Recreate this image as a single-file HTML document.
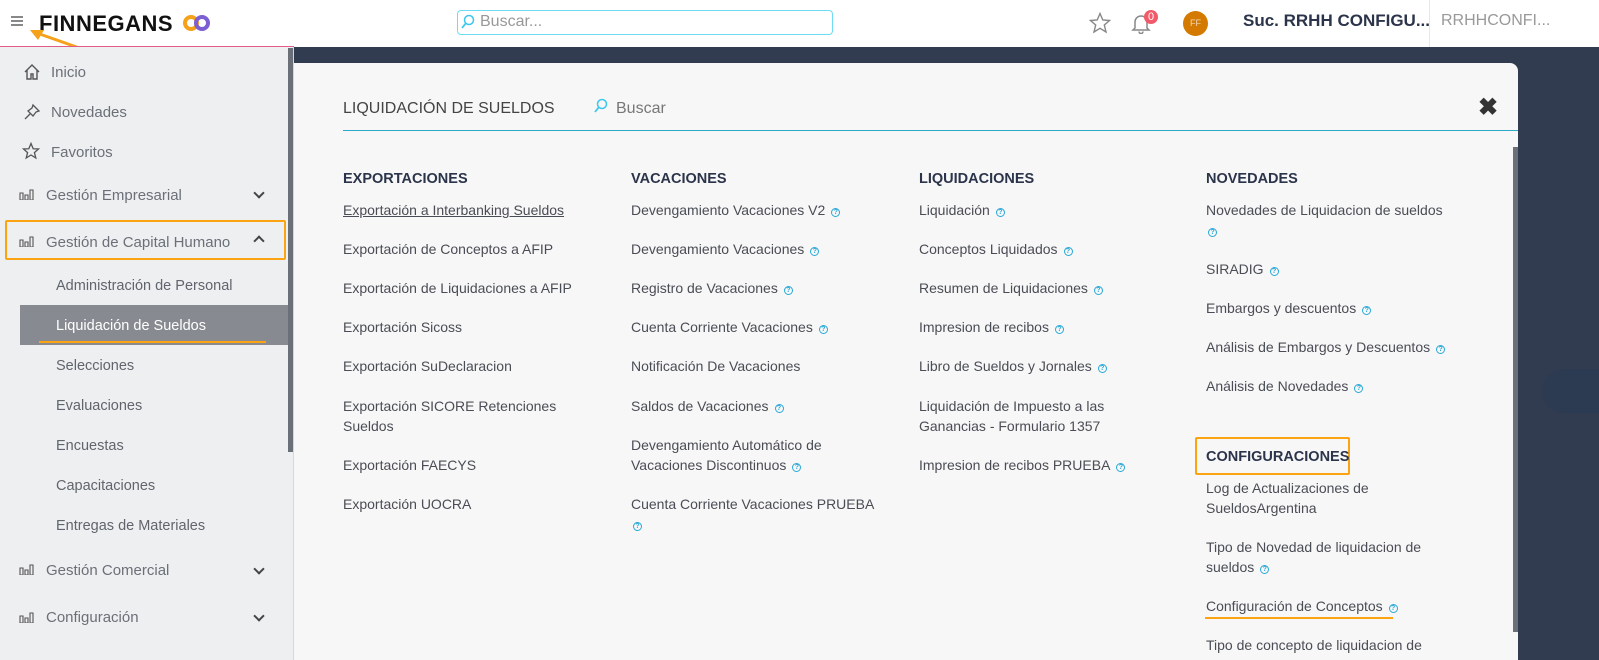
<!DOCTYPE html>
<html><head><meta charset="utf-8">
<style>
*{margin:0;padding:0;box-sizing:border-box}
body{width:1599px;height:660px;overflow:hidden;background:#323c51;font-family:"Liberation Sans",sans-serif;position:relative}
.a{position:absolute;white-space:nowrap}
#top{position:absolute;left:0;top:0;width:1599px;height:47px;background:#fff}
#side{position:absolute;left:0;top:47px;width:294px;height:613px;background:#eeeff1;border-right:1px solid #d6d7da}
.si{position:absolute;font-size:15px;color:#6b6f78}
.sub{position:absolute;font-size:14.5px;color:#60646c;left:56px}
#modal{position:absolute;left:294px;top:63px;width:1224px;height:597px;background:#f7f7f7;border-top-right-radius:8px}
.h{position:absolute;font-size:14.5px;font-weight:bold;color:#2b344a}
.it{position:absolute;font-size:14px;color:#4a4d55;line-height:20px;width:270px}
.q{display:inline-block;width:9px;height:9px;border:1px solid #29a8d8;border-radius:50%;font-size:7px;line-height:7px;text-align:center;color:#29a8d8;margin-left:6px;vertical-align:1px;font-weight:bold}
.bars{position:absolute;left:19px;width:15px;height:11px}
.chev{position:absolute;left:255px;width:8px;height:8px;border-right:2px solid #444;border-bottom:2px solid #444;transform:rotate(45deg)}
</style></head><body>
<div id="top">
  <div class="a" style="left:11px;top:16px;width:12px;height:2px;background:#888;box-shadow:0 4px 0 #888,0 8px 0 #888"></div>
  <div class="a" style="left:39px;top:11px;font-size:22px;font-weight:bold;color:#111;letter-spacing:0.5px">FINNEGANS</div>
  <svg class="a" style="left:183px;top:14px" width="28" height="18"><circle cx="8" cy="9" r="6" fill="none" stroke="#f5a21a" stroke-width="4"/><circle cx="19" cy="9" r="6" fill="none" stroke="#7b5fd3" stroke-width="4"/></svg>
  <svg class="a" style="left:28px;top:28px" width="80" height="32"><line x1="74" y1="28" x2="6" y2="4" stroke="#f5a21a" stroke-width="3"/><polygon points="2,2 16,2 10,12" fill="#f5a21a"/></svg>
  <div class="a" style="left:457px;top:10px;width:376px;height:25px;border:1px solid #6fdcf5;border-radius:4px"></div>
  <svg class="a" style="left:461px;top:14px" width="14" height="16"><circle cx="8" cy="6" r="4.5" fill="none" stroke="#3cc7ee" stroke-width="1.5"/><line x1="5" y1="9" x2="1" y2="14" stroke="#3cc7ee" stroke-width="1.8"/></svg>
  <div class="a" style="left:480px;top:13px;font-size:16px;color:#999">Buscar...</div>
  <svg class="a" style="left:1089px;top:12px" width="22" height="22"><polygon points="11,1.5 13.8,8 20.5,8.5 15.3,13 17,20 11,16.3 5,20 6.7,13 1.5,8.5 8.2,8" fill="none" stroke="#888" stroke-width="1.4"/></svg>
  <svg class="a" style="left:1131px;top:12px" width="20" height="22"><path d="M4 16 V10 a6 6 0 0 1 12 0 V16 L18 18 H2 Z" fill="none" stroke="#888" stroke-width="1.5"/><path d="M8 19.5 a2 2 0 0 0 4 0" fill="none" stroke="#888" stroke-width="1.5"/></svg>
  <div class="a" style="left:1144px;top:10px;width:14px;height:14px;border-radius:50%;background:#f15a6a;color:#fff;font-size:11px;text-align:center;line-height:14px">0</div>
  <div class="a" style="left:1183px;top:11px;width:25px;height:25px;border-radius:50%;background:#d47a00;color:#f4d9b8;font-size:9px;text-align:center;line-height:25px">FF</div>
  <div class="a" style="left:1243px;top:11px;font-size:17px;font-weight:bold;color:#2b344a">Suc. RRHH CONFIGU...</div>
  <div class="a" style="left:1429px;top:0;width:1px;height:47px;background:#e8e8e8"></div>
  <div class="a" style="left:1441px;top:12px;font-size:16px;color:#999">RRHHCONFI...</div>
</div>
<div class="a" style="left:0;top:46px;width:294px;height:2px;background:#e25d86"></div>
<div id="side">
  <div class="a" style="left:288px;top:1px;width:5px;height:404px;background:#6b6f78"></div>
  <svg class="a" style="left:23px;top:16px" width="18" height="18"><path d="M2 9 L9 2 L16 9 M4 7 V16 H8 V11 H10 V16 H14 V7" fill="none" stroke="#555" stroke-width="1.4"/></svg>
  <div class="si" style="left:51px;top:17px">Inicio</div>
  <svg class="a" style="left:23px;top:56px" width="18" height="18"><path d="M10 2 L16 8 L13 9 L10 13 L5 8 L9 5 Z M7 11 L2 16" fill="none" stroke="#555" stroke-width="1.3"/></svg>
  <div class="si" style="left:51px;top:57px">Novedades</div>
  <svg class="a" style="left:22px;top:95px" width="18" height="18"><polygon points="9,1.5 11.2,6.8 16.5,7 12.4,10.6 13.8,16 9,13 4.2,16 5.6,10.6 1.5,7 6.8,6.8" fill="none" stroke="#555" stroke-width="1.3"/></svg>
  <div class="si" style="left:51px;top:97px">Favoritos</div>
  <svg class="bars" style="top:142px" viewBox="0 0 15 11"><path d="M1 4h3v7H1z M6 6h3v5H6z M11 1h3v10h-3z" fill="none" stroke="#555" stroke-width="1.1"/></svg>
  <div class="si" style="left:46px;top:140px">Gestión Empresarial</div>
  <div class="chev" style="top:142px"></div>
  <div class="a" style="left:5px;top:173px;width:281px;height:40px;border:2px solid #fca311;border-radius:2px"></div>
  <svg class="bars" style="top:189px" viewBox="0 0 15 11"><path d="M1 4h3v7H1z M6 6h3v5H6z M11 1h3v10h-3z" fill="none" stroke="#555" stroke-width="1.1"/></svg>
  <div class="si" style="left:46px;top:187px">Gestión de Capital Humano</div>
  <div class="chev" style="top:190px;transform:rotate(225deg)"></div>
  <div class="sub" style="top:231px">Administración de Personal</div>
  <div class="a" style="left:20px;top:258px;width:268px;height:40px;background:#878a90"></div>
  <div class="sub" style="top:271px;color:#fff">Liquidación de Sueldos</div>
  <div class="a" style="left:39px;top:294px;width:227px;height:2px;background:#fca311"></div>
  <div class="sub" style="top:311px">Selecciones</div>
  <div class="sub" style="top:351px">Evaluaciones</div>
  <div class="sub" style="top:391px">Encuestas</div>
  <div class="sub" style="top:431px">Capacitaciones</div>
  <div class="sub" style="top:471px">Entregas de Materiales</div>
  <svg class="bars" style="top:517px" viewBox="0 0 15 11"><path d="M1 4h3v7H1z M6 6h3v5H6z M11 1h3v10h-3z" fill="none" stroke="#555" stroke-width="1.1"/></svg>
  <div class="si" style="left:46px;top:515px">Gestión Comercial</div>
  <div class="chev" style="top:518px"></div>
  <svg class="bars" style="top:565px" viewBox="0 0 15 11"><path d="M1 4h3v7H1z M6 6h3v5H6z M11 1h3v10h-3z" fill="none" stroke="#555" stroke-width="1.1"/></svg>
  <div class="si" style="left:46px;top:562px">Configuración</div>
  <div class="chev" style="top:565px"></div>
</div>
<div id="modal">
  <div class="a" style="left:49px;top:37px;font-size:16px;color:#444">LIQUIDACIÓN DE SUELDOS</div>
  <svg class="a" style="left:300px;top:35px" width="14" height="16"><circle cx="8" cy="6" r="4.5" fill="none" stroke="#3cc7ee" stroke-width="1.5"/><line x1="5" y1="9" x2="1" y2="14" stroke="#3cc7ee" stroke-width="1.8"/></svg>
  <div class="a" style="left:322px;top:37px;font-size:16px;color:#777">Buscar</div>
  <div class="a" style="left:1184px;top:30px;font-size:24px;font-weight:bold;color:#333">✖</div>
  <div class="a" style="left:49px;top:67px;width:1175px;height:1px;background:#2aa9c9"></div>
  <div class="a" style="left:1219px;top:84px;width:5px;height:485px;background:#6b6f78"></div>

  <div class="h" style="left:49px;top:108px">EXPORTACIONES</div>
  <div class="it" style="left:49px;top:137px;text-decoration:underline">Exportación a Interbanking Sueldos</div>
  <div class="it" style="left:49px;top:176px">Exportación de Conceptos a AFIP</div>
  <div class="it" style="left:49px;top:215px">Exportación de Liquidaciones a AFIP</div>
  <div class="it" style="left:49px;top:254px">Exportación Sicoss</div>
  <div class="it" style="left:49px;top:293px">Exportación SuDeclaracion</div>
  <div class="it" style="left:49px;top:333px;width:230px">Exportación SICORE Retenciones Sueldos</div>
  <div class="it" style="left:49px;top:392px">Exportación FAECYS</div>
  <div class="it" style="left:49px;top:431px">Exportación UOCRA</div>

  <div class="h" style="left:337px;top:108px">VACACIONES</div>
  <div class="it" style="left:337px;top:137px">Devengamiento Vacaciones V2<span class="q">?</span></div>
  <div class="it" style="left:337px;top:176px">Devengamiento Vacaciones<span class="q">?</span></div>
  <div class="it" style="left:337px;top:215px">Registro de Vacaciones<span class="q">?</span></div>
  <div class="it" style="left:337px;top:254px">Cuenta Corriente Vacaciones<span class="q">?</span></div>
  <div class="it" style="left:337px;top:293px">Notificación De Vacaciones</div>
  <div class="it" style="left:337px;top:333px">Saldos de Vacaciones<span class="q">?</span></div>
  <div class="it" style="left:337px;top:372px;width:215px">Devengamiento Automático de Vacaciones Discontinuos<span class="q">?</span></div>
  <div class="it" style="left:337px;top:431px">Cuenta Corriente Vacaciones PRUEBA<br><span class="q" style="margin-left:2px">?</span></div>

  <div class="h" style="left:625px;top:108px">LIQUIDACIONES</div>
  <div class="it" style="left:625px;top:137px">Liquidación<span class="q">?</span></div>
  <div class="it" style="left:625px;top:176px">Conceptos Liquidados<span class="q">?</span></div>
  <div class="it" style="left:625px;top:215px">Resumen de Liquidaciones<span class="q">?</span></div>
  <div class="it" style="left:625px;top:254px">Impresion de recibos<span class="q">?</span></div>
  <div class="it" style="left:625px;top:293px">Libro de Sueldos y Jornales<span class="q">?</span></div>
  <div class="it" style="left:625px;top:333px;width:210px">Liquidación de Impuesto a las Ganancias - Formulario 1357</div>
  <div class="it" style="left:625px;top:392px">Impresion de recibos PRUEBA<span class="q">?</span></div>

  <div class="h" style="left:912px;top:108px">NOVEDADES</div>
  <div class="it" style="left:912px;top:137px">Novedades de Liquidacion de sueldos<br><span class="q" style="margin-left:2px">?</span></div>
  <div class="it" style="left:912px;top:196px">SIRADIG<span class="q">?</span></div>
  <div class="it" style="left:912px;top:235px">Embargos y descuentos<span class="q">?</span></div>
  <div class="it" style="left:912px;top:274px">Análisis de Embargos y Descuentos<span class="q">?</span></div>
  <div class="it" style="left:912px;top:313px">Análisis de Novedades<span class="q">?</span></div>
  <div class="a" style="left:901px;top:374px;width:155px;height:38px;border:2px solid #fca311;border-radius:2px"></div>
  <div class="h" style="left:912px;top:386px">CONFIGURACIONES</div>
  <div class="it" style="left:912px;top:415px;width:200px">Log de Actualizaciones de SueldosArgentina</div>
  <div class="it" style="left:912px;top:474px;width:240px">Tipo de Novedad de liquidacion de sueldos<span class="q">?</span></div>
  <div class="it" style="left:912px;top:533px">Configuración de Conceptos<span class="q">?</span></div>
  <div class="a" style="left:911px;top:554px;width:188px;height:2px;background:#fca311"></div>
  <div class="it" style="left:912px;top:572px">Tipo de concepto de liquidacion de</div>
</div>
<div class="a" style="left:1542px;top:369px;width:57px;height:44px;border-radius:22px 0 0 22px;background:#2c3a52"></div>
</body></html>
